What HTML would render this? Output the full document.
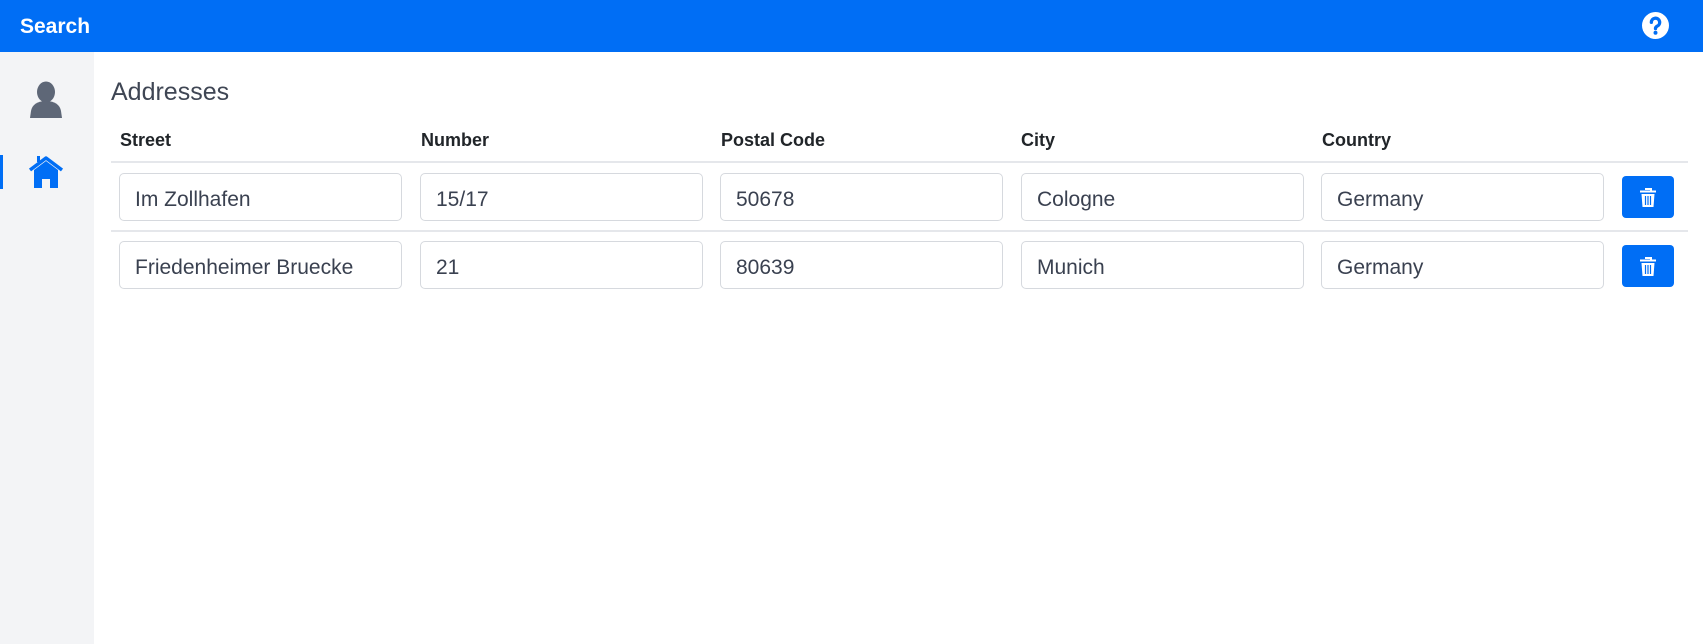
<!DOCTYPE html>
<html><head><meta charset="utf-8"><style>
*{box-sizing:border-box;margin:0;padding:0}
body{width:1703px;height:644px;overflow:hidden;background:#fff;font-family:"Liberation Sans",sans-serif;color:#212529;position:relative}
.hdr{position:absolute;left:0;top:0;width:1703px;height:52px;background:#006ef5}
.hdr .t{position:absolute;left:20px;top:15px;color:#fff;font-weight:bold;font-size:21px}
.side{position:absolute;left:0;top:52px;width:94px;height:592px;background:#f3f4f6}
.bar{position:absolute;left:0;top:155px;width:3px;height:34px;background:#006ef5}
h1{position:absolute;left:111px;top:78px;font-weight:normal;font-size:25px;color:#3f4654}
.lbl{position:absolute;top:130px;font-weight:bold;font-size:18px;color:#212529}
.line{position:absolute;left:111px;width:1577px;height:2px;background:#e5e7eb}
.in{position:absolute;width:283px;height:48px;border:1px solid #d6d9de;border-radius:5px;padding-left:15px;padding-top:3px;line-height:46px;font-size:21px;color:#3a4150}
.btn{position:absolute;left:1622px;width:52px;height:42px;background:#006ef5;border-radius:4px}
.btn svg{position:absolute;left:17px;top:11px}
</style></head><body>
<div class="hdr"><div class="t">Search</div>
<svg style="position:absolute;left:1642px;top:12px" width="27" height="27" viewBox="0 0 26 26"><circle cx="13" cy="13" r="13" fill="#fff"/><path d="M9 10a4 4 0 1 1 5.5 3.7c-1 .5-1.5 1-1.5 2.3" stroke="#006ef5" stroke-width="3.2" fill="none" stroke-linecap="round"/><circle cx="13" cy="20" r="1.9" fill="#006ef5"/></svg>
</div>
<div class="side"><div class="bar" style="top:103px"></div>
<svg style="position:absolute;left:29px;top:29px" width="34" height="38" viewBox="0 0 34 38"><ellipse cx="17" cy="11" rx="9" ry="10.5" fill="#5e6777"/><path d="M17 20c-9 0-14 4-15 10l-1 7h32l-1-7c-1-6-6-10-15-10z" fill="#5e6777"/></svg>
<svg style="position:absolute;left:28px;top:103px" width="36" height="34" viewBox="0 0 36 34"><path d="M2 15L18 3l16 12" stroke="#006ef5" stroke-width="3.5" fill="none" stroke-linejoin="round"/><rect x="9" y="1" width="3" height="6" fill="#006ef5"/><path d="M6 15l12-9 12 9v18h-8v-9h-8v9H6z" fill="#006ef5"/></svg>
</div>
<h1>Addresses</h1>
<div class="lbl" style="left:120px">Street</div>
<div class="lbl" style="left:421px">Number</div>
<div class="lbl" style="left:721px">Postal Code</div>
<div class="lbl" style="left:1021px">City</div>
<div class="lbl" style="left:1322px">Country</div>
<div class="line" style="top:161px"></div>
<div class="line" style="top:230px"></div>
<div class="in" style="left:119px;top:173px">Im Zollhafen</div>
<div class="in" style="left:420px;top:173px">15/17</div>
<div class="in" style="left:720px;top:173px">50678</div>
<div class="in" style="left:1021px;top:173px">Cologne</div>
<div class="in" style="left:1321px;top:173px">Germany</div>
<div class="in" style="left:119px;top:241px">Friedenheimer Bruecke</div>
<div class="in" style="left:420px;top:241px">21</div>
<div class="in" style="left:720px;top:241px">80639</div>
<div class="in" style="left:1021px;top:241px">Munich</div>
<div class="in" style="left:1321px;top:241px">Germany</div>
<div class="btn" style="top:176px"><svg width="18" height="21" viewBox="0 0 18 21"><path d="M6 2h6v2M1 4.5h16" stroke="#fff" stroke-width="2" fill="none"/><path d="M2.5 7h13l-1 13h-11z" fill="#fff"/><path d="M6.5 9v9M9 9v9M11.5 9v9" stroke="#006ef5" stroke-width="1.2"/></svg></div>
<div class="btn" style="top:245px"><svg width="18" height="21" viewBox="0 0 18 21"><path d="M6 2h6v2M1 4.5h16" stroke="#fff" stroke-width="2" fill="none"/><path d="M2.5 7h13l-1 13h-11z" fill="#fff"/><path d="M6.5 9v9M9 9v9M11.5 9v9" stroke="#006ef5" stroke-width="1.2"/></svg></div>
</body></html>
